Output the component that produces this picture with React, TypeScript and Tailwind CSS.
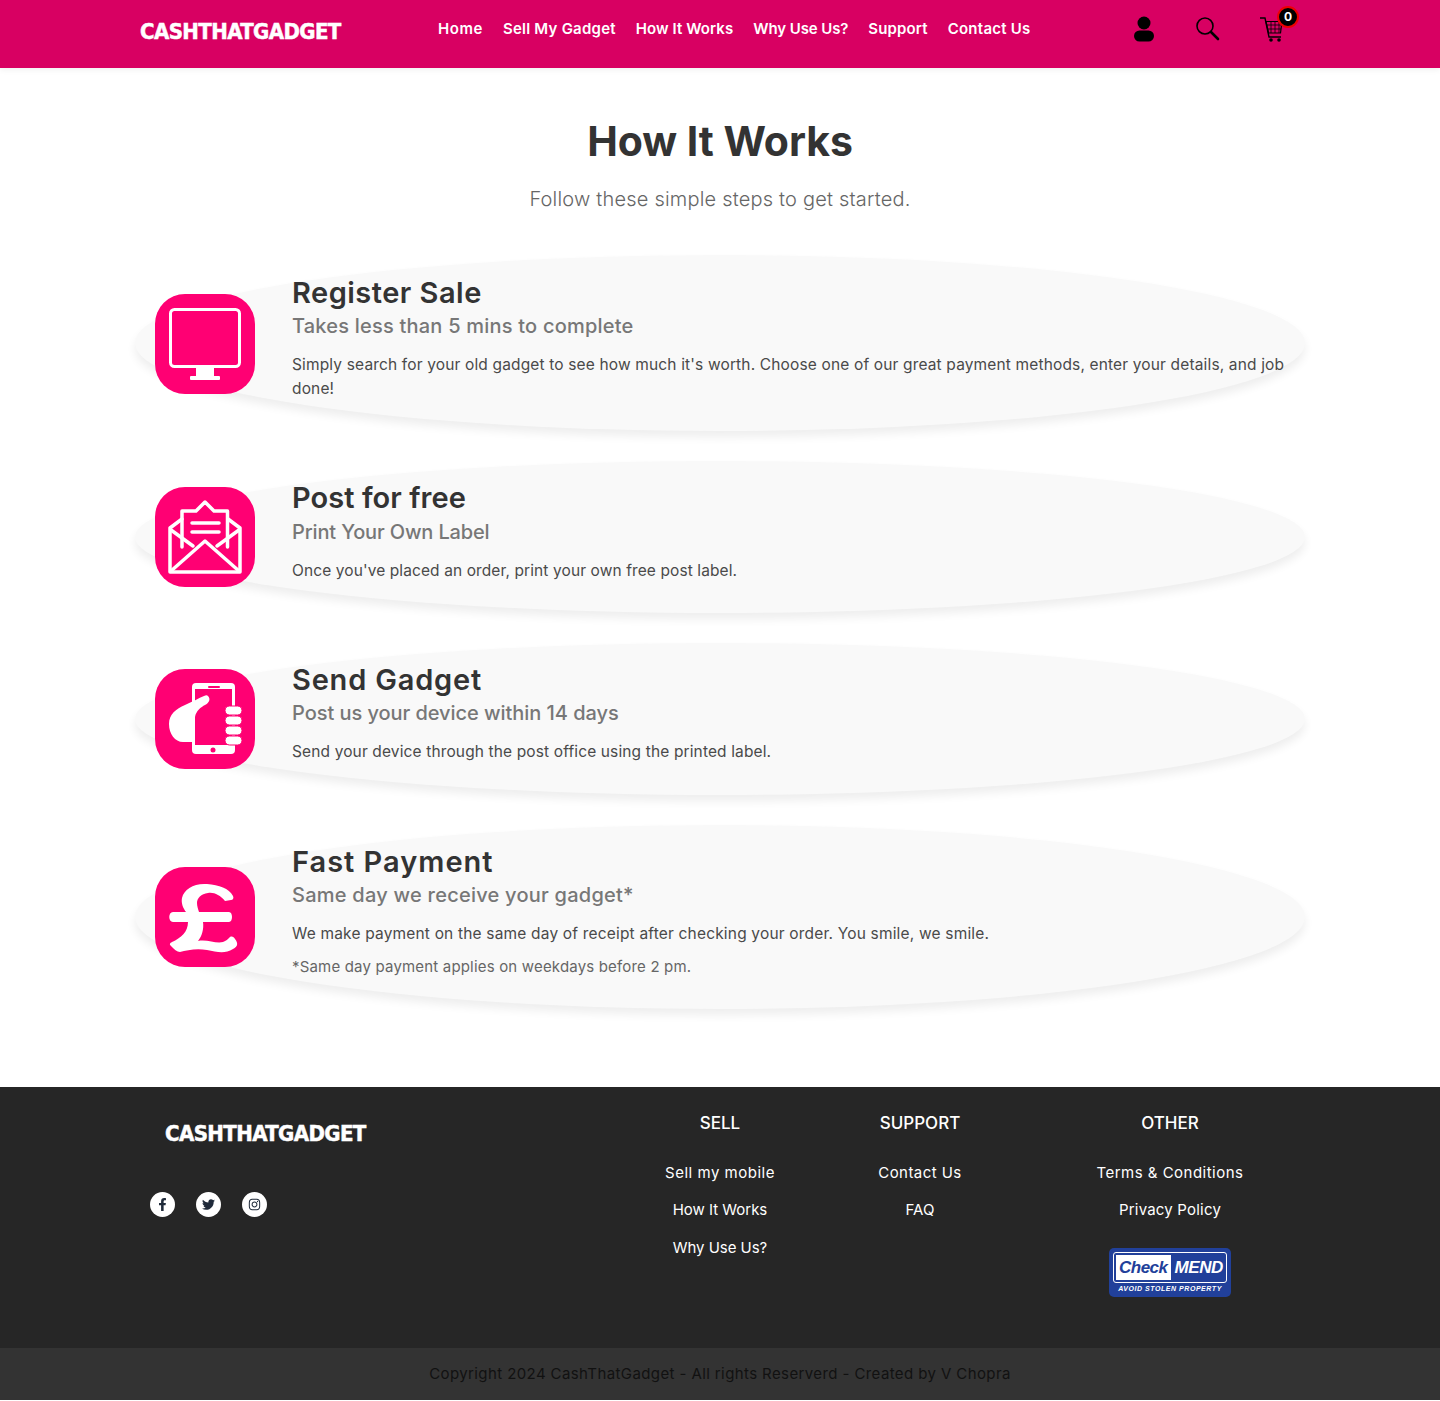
import React from "react";
import { FaFacebookF, FaTwitter, FaInstagram } from "react-icons/fa";

const body = "[font-family:Inter,'Liberation_Sans',sans-serif]";

function Logo({ className }: { className: string }) {
  return (
    <div className={`[font-family:'DejaVu_Sans',sans-serif] font-bold text-white uppercase whitespace-nowrap text-[22px] leading-none tracking-[-0.6px] [font-stretch:condensed] [-webkit-text-stroke:0.5px_white] ${className}`}>
      CashThatGadget
    </div>
  );
}

function Tile({ children }: { children: React.ReactNode }) {
  return (
    <div className="w-[100px] h-[100px] shrink-0 rounded-[30px] bg-[#ff0073] relative z-10">
      <svg viewBox="0 0 100 100" className="w-full h-full">{children}</svg>
    </div>
  );
}

const Monitor = () => (
  <Tile>
    <rect x="15.5" y="15.5" width="69" height="57" rx="4" fill="none" stroke="#fff" strokeWidth="3" />
    <rect x="41" y="74" width="18" height="8" fill="#fff" />
    <rect x="35" y="82" width="30" height="4" rx="1" fill="#fff" />
  </Tile>
);

const Envelope = () => (
  <Tile>
    <g fill="none" stroke="#fff" strokeWidth="3.5" strokeLinejoin="round" strokeLinecap="round">
      <path d="M27 32 L15 41 V85 H85 V41 L73 32" />
      <path d="M27 60 V24 H41 L50 15 L59 24 H72.500 V60" />
      <path d="M16 43 L38 59 M84 43 L62 59" />
      <path d="M16 84 L50 54 L84 84" />
      <path d="M37 36 H64 M37 45 H64" />
    </g>
  </Tile>
);

const Phone = () => (
  <Tile>
    <rect x="37" y="14" width="43" height="71" rx="4" fill="#fff" />
    <rect x="40" y="20" width="37" height="56" fill="#ff0073" />
    <rect x="53" y="17" width="12" height="2" rx="1" fill="#ff0073" />
    <circle cx="58" cy="81" r="2.500" fill="#ff0073" />
    <path d="M53 27 C56 30 54 34 50 36 C46 38 41 42 40 48 V73 H28 C20 73 14 65 14 55 C14 45 21 40 30 36 C37 33 44 29 49 27 C51 26 52 26 53 27 Z" fill="#fff" />
    <g fill="#fff" stroke="#ff0073" strokeWidth="1">
      <rect x="70" y="37" width="17" height="9" rx="4.500" />
      <rect x="70" y="47" width="17" height="9" rx="4.500" />
      <rect x="70" y="57" width="17" height="9" rx="4.500" />
      <rect x="70" y="67" width="17" height="9" rx="4.500" />
    </g>
  </Tile>
);

const Pound = () => (
  <Tile>
    <path
      fill="#fff"
      d="M78 29 C79 31 78 33 76 33 L70 34 C65 28 59 25 53 26 C46 27 42 31 42 36 C42 39 43 42 44 45 H74 C78 45 78 55 74 55 H48 C49 62 47 69 43 74 C52 72 61 77 68 75 C71 74 73 72 75 70 C77 69 79 70 80 72 C84 77 82 80 78 82 C70 87 62 85 52 83 C42 81 32 83 25 85 C22 85 19 82 16 79 C14 77 15 76 17 75 C26 71 33 65 33 55 H18 C13 55 13 45 18 45 H31 C28 41 26 36 27 31 C29 22 39 16 52 17 C64 18 74 21 78 29 Z"
    />
  </Tile>
);

function Step({
  icon, title, sub, titleClass, subClass, textClass, innerClass, iconClass, children, className,
}: {
  icon: React.ReactNode; title: string; sub: string; titleClass: string; subClass: string; textClass: string;
  innerClass: string; iconClass?: string; children: React.ReactNode; className: string;
}) {
  return (
    <section className={`flex items-center rounded-[50%] bg-[#f9f9f9] shadow-[0_6px_10px_rgba(0,0,0,0.07)] pl-5 pr-[10px] ${className}`}>
      <div className={iconClass}>{icon}</div>
      <div className={`ml-[37px] ${innerClass}`}>
        <h2 className={`text-[29px] leading-[36px] font-semibold text-[#333] whitespace-nowrap ${titleClass}`}>{title}</h2>
        <h3 className={`text-[20px] leading-[30px] font-medium text-[#777] whitespace-nowrap ${subClass}`}>{sub}</h3>
        <div className={`mt-[12px] text-[15.500px] leading-[24px] text-[#4a4a4a] ${textClass}`}>{children}</div>
      </div>
    </section>
  );
}

function FooterCol({ title, links, className, children }: { title: string; links: [string, string][]; className: string; children?: React.ReactNode }) {
  return (
    <div className={`flex flex-col items-center text-white ${className}`}>
      <h4 className="text-[17px] leading-[28px] font-medium mb-[24px]">{title}</h4>
      {links.map(([l, c]) => (
        <a key={l} className={`text-[15px] leading-[24px] mb-[13px] ${c}`}>{l}</a>
      ))}
      {children}
    </div>
  );
}

export default function App() {
  return (
    <div className={`${body} bg-white min-h-[1401px]`}>
      <header className="h-[68px] bg-[#d80062] shadow-[0_2px_6px_rgba(0,0,0,0.06)] flex items-center pl-[140px] pr-[157px] pb-[10px]">
        <Logo className="w-[202px] mt-[6px]" />
        <nav className="ml-[96px] flex gap-5 text-white text-[15px] font-semibold whitespace-nowrap">
          <a className="tracking-[0.55px]">Home</a>
          <a className="tracking-[0.24px]">Sell My Gadget</a>
          <a className="tracking-[0.07px]">How It Works</a>
          <a className="tracking-[-0.1px]">Why Use Us?</a>
          <a className="tracking-[0.14px]">Support</a>
          <a className="tracking-[0.25px]">Contact Us</a>
        </nav>
        <div className="ml-auto flex items-center gap-[37px] relative">
          <svg viewBox="0 0 26 30" className="w-[26px] h-[30px]">
            <circle cx="13" cy="9" r="6.500" />
            <rect x="3" y="16.500" width="20" height="11" rx="5.500" />
          </svg>
          <svg viewBox="0 0 26 30" className="w-[26px] h-[30px]">
            <circle cx="11" cy="12" r="8" fill="none" stroke="#000" strokeWidth="1.600" />
            <path d="M17 18 L24 25" stroke="#000" strokeWidth="2.600" strokeLinecap="round" />
          </svg>
          <div className="relative w-[26px] h-[30px]">
            <svg viewBox="0 0 26 30" className="w-[26px] h-[30px]">
              <path d="M3 4 H8 L12 23 H24" fill="none" stroke="#000" strokeWidth="1.400" />
              <path d="M9 7.500 H25 L23.500 19 H11.500 Z" fill="none" stroke="#000" strokeWidth="1.200" />
              <path d="M10 11 H25 M11 15 H24 M14 8 V19 M18 8 V19 M22 8 V19" stroke="#000" strokeWidth="0.800" />
              <circle cx="14" cy="26" r="1.800" />
              <circle cx="22" cy="26" r="1.800" />
            </svg>
            <span className="absolute -top-[8px] left-[20px] w-[22px] h-[22px] rounded-full bg-black border-2 border-[#ee0000] text-white text-[12px] font-bold flex items-center justify-center">0</span>
          </div>
        </div>
      </header>

      <main className="w-[1170px] mx-auto">
        <h1 className="mt-[46px] text-center text-[41px] leading-[54px] font-bold text-[#333] tracking-[-0.05px]">How It Works</h1>
        <p className="mt-[16px] text-center text-[20px] leading-[30px] font-light text-[#666] tracking-[0.2px]">Follow these simple steps to get started.</p>

        <div className="mt-[41px] flex flex-col gap-[30px]">
          <Step className="h-[176px]" iconClass="mt-[2px]" innerClass="pt-[22px] pb-[32px]" icon={<Monitor />} title="Register Sale" sub="Takes less than 5 mins to complete" titleClass="tracking-[0.48px]" subClass="tracking-[0.21px]" textClass="tracking-[0.15px]">
            <p>Simply search for your old gadget to see how much it's worth. Choose one of our great payment methods, enter your details, and job done!</p>
          </Step>
          <Step className="h-[152px]" innerClass="pt-5 pb-[32px]" icon={<Envelope />} title="Post for free" sub="Print Your Own Label" titleClass="tracking-[0.06px]" subClass="tracking-[-0.15px] mt-[1px]" textClass="tracking-[0.1px] -mb-[1px]">
            <p>Once you've placed an order, print your own free post label.</p>
          </Step>
          <Step className="h-[152px]" innerClass="pt-5 pb-[32px]" icon={<Phone />} title="Send Gadget" sub="Post us your device within 14 days" titleClass="tracking-[0.8px]" subClass="tracking-[-0.05px]" textClass="tracking-[0.13px]">
            <p>Send your device through the post office using the printed label.</p>
          </Step>
          <Step className="h-[184px]" innerClass="pt-5 pb-[32px]" icon={<Pound />} title="Fast Payment" sub="Same day we receive your gadget*" titleClass="tracking-[1px]" subClass="tracking-[0.24px]" textClass="tracking-[0.18px]">
            <p>We make payment on the same day of receipt after checking your order. You smile, we smile.</p>
            <p className="mt-[9px] text-[15px] text-[#666]">*Same day payment applies on weekdays before 2 pm.</p>
          </Step>
        </div>
      </main>

      <footer className="mt-[78px]">
        <div className="h-[261px] bg-[#262626]">
          <div className="w-[1200px] mx-auto grid grid-cols-12 pt-[22px]">
            <div className="col-span-5 pl-[45px]">
              <Logo className="mt-[14px]" />
              <div className="mt-[47px] -ml-[15px] flex gap-[21px]">
                {[<FaFacebookF key="f" />, <FaTwitter key="t" />, <FaInstagram key="i" />].map((ic, i) => (
                  <span key={i} className="w-[25px] h-[25px] rounded-full bg-white text-[#1f2a3a] text-[13px] flex items-center justify-center">{ic}</span>
                ))}
              </div>
            </div>
            <FooterCol className="col-span-2" title="SELL" links={[["Sell my mobile", "tracking-[0.51px]"], ["How It Works", "tracking-[-0.02px]"], ["Why Use Us?", "tracking-[-0.03px] mt-[1px]"]]} />
            <FooterCol className="col-span-2" title="SUPPORT" links={[["Contact Us", "tracking-[0.45px]"], ["FAQ", "tracking-[0.15px]"]]} />
            <FooterCol className="col-span-3" title="OTHER" links={[["Terms & Conditions", "tracking-[0.48px]"], ["Privacy Policy", "tracking-[0.2px]"]]}>
              <div className="mt-[13px] w-[122px] h-[49px] rounded-[5px] bg-[#21409a] px-[4px] pt-[4px] flex flex-col items-center [font-family:'Liberation_Sans',sans-serif] italic font-bold">
                <div className="w-full h-[31px] rounded-[3px] border border-white flex items-center p-[2px] text-[17px] leading-none">
                  <span className="bg-white text-[#21409a] h-full px-[3px] flex items-center tracking-[-0.5px]">Check</span>
                  <span className="text-white ml-[4px] tracking-[-0.4px]">MEND</span>
                </div>
                <div className="text-white text-[7px] leading-[11px] tracking-[0.55px] whitespace-nowrap">AVOID STOLEN PROPERTY</div>
              </div>
            </FooterCol>
          </div>
        </div>
        <div className="h-[52px] bg-[#333] flex items-center justify-center text-[15px] text-[#111] tracking-[0.4px]">
          Copyright 2024 CashThatGadget - All rights Reserverd - Created by V Chopra
        </div>
      </footer>
    </div>
  );
}
